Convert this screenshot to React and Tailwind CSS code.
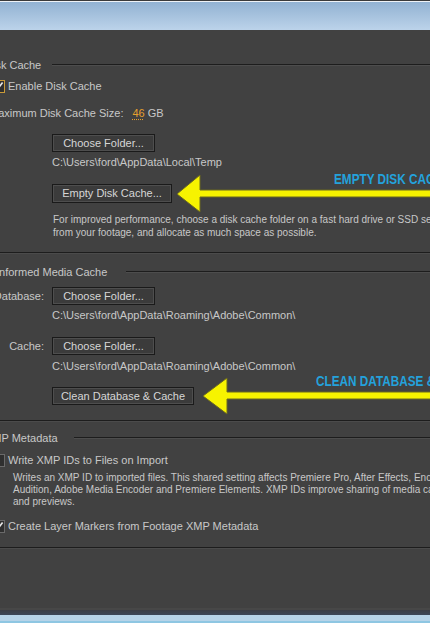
import React from "react";

function Check({ checked, gold }) {
  return (
    <div
      className={
        "w-[13px] h-[13px] shrink-0 border bg-[#2f2f2f] flex items-center justify-center " +
        (gold ? "border-[#c99a38]" : "border-[#6a6a6a]")
      }
    >
      {checked && (
        <svg width="11" height="11" viewBox="0 0 11 11">
          <path d="M1.5 5.5 L4.2 8.6 L9.6 1.6" stroke="#e6e6e6" strokeWidth="1.7" fill="none" />
        </svg>
      )}
    </div>
  );
}

function Header({ children, gap, mt }) {
  return (
    <div className={"h-[14px] flex items-center " + mt}>
      <span className="leading-[14px] whitespace-nowrap">{children}</span>
      <div className={"flex-1 h-[2px] border-t border-[#1d1d1d] bg-[#4d4d4d] " + gap} />
    </div>
  );
}

function Btn({ children, w, h = "h-[18px]", mt = "" }) {
  return (
    <div
      className={
        "border border-[#1a1a1a] bg-[#3b3b3b] shadow-[inset_0_0_0_1px_#4e4e4e] text-[#d6d6d6] flex items-center justify-center whitespace-nowrap " +
        w +
        " " +
        h +
        " " +
        mt
      }
    >
      {children}
    </div>
  );
}

function Sep({ mt }) {
  return <div className={"h-[2px] border-t border-[#1d1d1d] bg-[#4b4b4b] " + mt} />;
}

export default function App() {
  return (
    <div className="relative w-[430px] h-[623px] overflow-hidden bg-[#414141] flex flex-col text-[11px] text-[#c8c8c8] font-['Liberation_Sans',Arial,sans-serif]">
      <div className="h-px shrink-0 bg-[#3a3a3a]" />
      <div className="h-px shrink-0 bg-[#eef2f6]" />
      <div className="h-[28px] shrink-0 bg-linear-to-b from-[#92b2d2] to-[#bcd3ea]" />

      <div className="flex-1 flex flex-col -ml-[15px]">
        <Header mt="mt-[28px]" gap="ml-[11px]">Disk Cache</Header>

        <div className="mt-[7px] h-[14px] flex items-center pl-[7px] gap-[3px]">
          <Check checked gold />
          <span className="whitespace-nowrap leading-[14px]">Enable Disk Cache</span>
        </div>

        <div className="mt-[13px] h-[14px] flex items-center pl-[4px] whitespace-nowrap leading-[14px]">
          <span>Maximum Disk Cache Size:</span>
          <span className="ml-[9px] text-[#e6a02e] underline decoration-dotted underline-offset-2">46</span>
          <span className="ml-[3px]">GB</span>
        </div>

        <div className="pl-[67px]">
          <Btn w="w-[103px]" mt="mt-[14px]">Choose Folder...</Btn>
        </div>
        <div className="mt-[3px] h-[14px] pl-[67px] leading-[14px] whitespace-nowrap">
          C:\Users\ford\AppData\Local\Temp
        </div>
        <div className="pl-[67px]">
          <Btn w="w-[120px]" h="h-[19px]" mt="mt-[15px]">Empty Disk Cache...</Btn>
        </div>
        <div className="mt-[10px] pl-[68px] text-[10px] leading-[13px] whitespace-nowrap">
          <div>For improved performance, choose a disk cache folder on a fast hard drive or SSD separate</div>
          <div>from your footage, and allocate as much space as possible.</div>
        </div>

        <Sep mt="mt-[13px]" />

        <Header mt="mt-[11px]" gap="ml-[19px]">Conformed Media Cache</Header>

        <div className="mt-[8px] h-[18px] flex items-center">
          <span className="w-[59px] text-right whitespace-nowrap">Database:</span>
          <div className="ml-[8px]">
            <Btn w="w-[103px]">Choose Folder...</Btn>
          </div>
        </div>
        <div className="mt-[3px] h-[14px] pl-[67px] leading-[14px] whitespace-nowrap">
          C:\Users\ford\AppData\Roaming\Adobe\Common\
        </div>

        <div className="mt-[15px] h-[18px] flex items-center">
          <span className="w-[59px] text-right whitespace-nowrap">Cache:</span>
          <div className="ml-[8px]">
            <Btn w="w-[103px]">Choose Folder...</Btn>
          </div>
        </div>
        <div className="mt-[4px] h-[14px] pl-[67px] leading-[14px] whitespace-nowrap">
          C:\Users\ford\AppData\Roaming\Adobe\Common\
        </div>
        <div className="pl-[67px]">
          <Btn w="w-[142px]" mt="mt-[14px]">Clean Database &amp; Cache</Btn>
        </div>

        <Sep mt="mt-[15px]" />

        <Header mt="mt-[9px]" gap="ml-[16px]">XMP Metadata</Header>

        <div className="mt-[8px] h-[14px] flex items-center pl-[7px] gap-[3px]">
          <Check />
          <span className="whitespace-nowrap leading-[14px]">Write XMP IDs to Files on Import</span>
        </div>
        <div className="mt-[5px] pl-[28px] text-[10px] leading-[12px] whitespace-nowrap">
          <div>Writes an XMP ID to imported files. This shared setting affects Premiere Pro, After Effects, Encore,</div>
          <div>Audition, Adobe Media Encoder and Premiere Elements. XMP IDs improve sharing of media cache files</div>
          <div>and previews.</div>
        </div>
        <div className="mt-[11px] h-[14px] flex items-center pl-[7px] gap-[3px]">
          <Check checked />
          <span className="whitespace-nowrap leading-[14px]">Create Layer Markers from Footage XMP Metadata</span>
        </div>

        <Sep mt="mt-[14px]" />
        <div className="flex-1" />
      </div>

      <div className="h-[2px] shrink-0 bg-[#474747]" />
      <div className="h-[5px] shrink-0 bg-linear-to-b from-[#3b3e45] to-[#3c4658]" />
      <div className="h-[6px] shrink-0 bg-[#b6d3e8]" />
      <div className="h-[2px] shrink-0 bg-[#8ec6e2]" />

      <svg className="absolute left-0 top-0 pointer-events-none" width="430" height="623">
        <polygon
          points="177,194 200,175 200,190 432,190 432,197 200,197 200,212"
          fill="#f7f300"
          stroke="#6b6920"
          strokeWidth="1"
        />
        <polygon
          points="203,396 227,378 227,392 432,392 432,399 227,399 227,414"
          fill="#f7f300"
          stroke="#6b6920"
          strokeWidth="1"
        />
      </svg>
      <div className="absolute left-[334px] top-[171px] text-[14px] leading-[16px] font-bold text-[#24a2dc] whitespace-nowrap origin-left scale-x-[0.84]">
        EMPTY DISK CACHE
      </div>
      <div className="absolute left-[316px] top-[373px] text-[14px] leading-[16px] font-bold text-[#24a2dc] whitespace-nowrap origin-left scale-x-[0.84]">
        CLEAN DATABASE &amp; CACHE
      </div>
    </div>
  );
}
